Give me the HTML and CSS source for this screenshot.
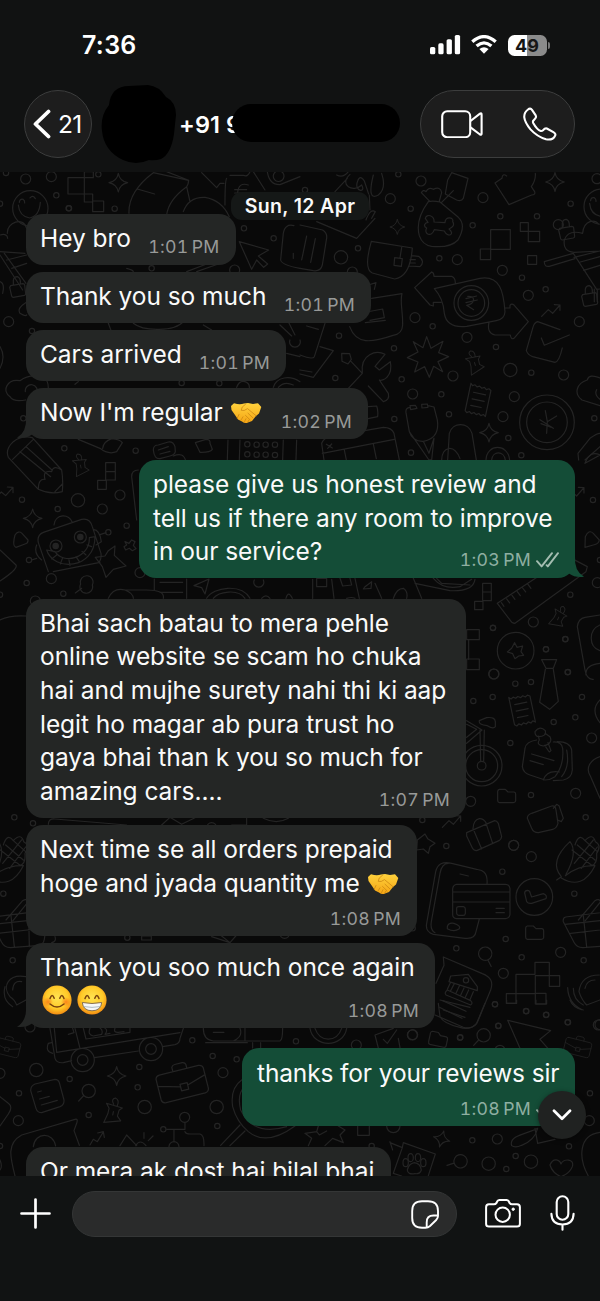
FILE: index.html
```html
<!DOCTYPE html>
<html lang="en">
<head>
<meta charset="utf-8">
<title>Chat</title>
<link rel="stylesheet" href="styles.css">
</head>
<body>
<div class="phone">
  <header class="header">
    <div class="status">
      <span class="clock">7:36</span>
      <div class="status-icons">
        <svg width="31" height="20" viewBox="0 0 31 20" fill="#fff"><rect x="0" y="12" width="5.3" height="7.3" rx="1.6"/><rect x="8.3" y="8.3" width="5.3" height="11" rx="1.6"/><rect x="16.6" y="4.2" width="5.3" height="15.1" rx="1.6"/><rect x="24.8" y="0" width="5.3" height="19.3" rx="1.6"/></svg>
        <svg class="wifi" width="26" height="20" viewBox="0 0 26 20"><g fill="none" stroke="#fff" stroke-width="3.3"><path d="M1.3 6.8Q13-3.5 24.7 6.8"/><path d="M5.6 11.1Q13 4.6 20.4 11.1"/></g><path d="M8.4 14Q13 10.4 17.6 14L13 18.8Z" fill="#fff"/></svg>
        <div class="battery"><span class="level"><b>49</b></span><i></i></div>
      </div>
    </div>
    <div class="toolbar">
      <div class="back"><svg width="18" height="30" viewBox="0 0 18 30" fill="none" stroke="#fff" stroke-width="3.8" stroke-linecap="round" stroke-linejoin="round"><path d="M15.5 2.5 2.5 15l13 12.5"/></svg><span>21</span></div>
      <svg class="avatar" width="76" height="80" viewBox="0 0 76 80"><path d="M8 20Q10 1 28 1L47 0Q58 1 65 12Q75 17 75 30L73 49Q70 69 60 74Q54 76 48 75Q35 81 22 75Q3 66 1 46Q-1 31 8 20Z"/></svg>
      <div class="name">+91 9<span class="redact"></span></div>
      <div class="calls">
        <svg width="42" height="28" viewBox="0 0 42 28" fill="none" stroke="#fff" stroke-width="2.1" stroke-linejoin="round"><rect x="1.2" y="1.2" width="28" height="26" rx="5"/><path d="M29.5 11 39 3.6Q40.6 2.8 40.6 4.7V23.5Q40.6 25.4 39 24.5L29.5 17.3"/></svg>
        <svg width="34" height="34" viewBox="0 0 34 34" fill="none" stroke="#fff" stroke-width="2.1" stroke-linejoin="round"><path d="M5 2.5Q7.3.5 9 2.9L12.7 8.4Q13.6 10 12.1 11.6L10.3 13.7Q9.6 14.7 10.2 16Q14 22.8 17.8 24Q19 24.2 20 23.2Q22 21 23.8 21.5L30.4 25.2Q33.5 27 31.8 29.2Q29.6 33.5 23 32.3Q14 29.6 7.5 22.4Q-3.6 9 5 2.5Z"/></svg>
      </div>
    </div>
  </header>

  <main class="chat">
    <svg class="wallpaper" width="600" height="1004" viewBox="0 172 600 1004">
      <defs>
        <marker id="ring" markerUnits="userSpaceOnUse" markerWidth="30" markerHeight="30" refX="15" refY="15" orient="0"><circle cx="15" cy="15" r="8" fill="none" stroke="#242424" stroke-width="3.6"/></marker>
        <marker id="ringL" markerUnits="userSpaceOnUse" markerWidth="40" markerHeight="40" refX="20" refY="20" orient="0"><circle cx="20" cy="20" r="15" fill="none" stroke="#242424" stroke-width="3.6"/></marker>
        <path id="spark" d="M0-28Q4-5 28 0Q4 5 0 28Q-4 5-28 0Q-4-5 0-28Z"/>
        <path id="lock" d="M-20-6 17-12Q21-12 22-8L25 18Q25 22 21 23L-12 29Q-16 29-17 25L-23-1ZM-12-9V-22Q-10-33 0-33Q10-30 9-13"/>
        <path id="lens" d="M22 0A20 20 0 1 1-18 0A20 20 0 1 1 22 0M-13 14-28 30"/>
        <path id="pin" d="M-28-22 24-16 15-7 13 12 26 25-26 39-18 10-17-8ZM-5-23Q-17-38-3-43Q12-39 7-20M-2 0V11"/>
        <path id="folder" d="M-22-20H-4L4-12H22Q27-11 27-6V15Q26 20 20 20H-22Q-27 19-27 13V-14Q-26-19-22-20Z"/>
        <path id="zig" d="M-28 22-8 2 5 13 27-12M10-13 27-12 27 4"/>
        <path id="receipt" d="M-30-45 -24-39-17-43-10-38-3-42 5-37 12-41 19-36 26-40 33-36 33 44 26 39 19 44 12 39 5 44-3 39-10 44-17 39-24 44-30 39ZM-17-20H20M-17 0H20M-17 20H15"/>
        <path id="case" d="M-60-35H55Q66-34 67-25V35Q66 45 55 46H-60Q-71 45-72 35V-25Q-71-34-60-35ZM-72-5-9 12M67-5 12 12M-9 5H12V24H-9ZM-20-36V-48Q-17-54-10-54H12Q20-53 21-46V-36"/>
        <g id="smile"><circle r="53"/><path d="M-36-10Q-33 24-2 29Q27 24 30-18M-33-18Q-32-29-22-27Q-16-23-17-16M-1-31Q8-42 15-29"/></g>
        <path id="basket" d="M-108-24 46-43Q60-39 54-24L45 43Q42 61 24 62L-57 68Q-75 68-83 52L-115-10Q-117-22-108-24ZM-110-2 50-19M-93 25 48 9M-55-28-45 65M-2-34 0 65M-70-15-20-73Q-8-81-3-70L-49-13"/>
        <path id="corn" d="M-50 55-36 45Q-75 0-10-60Q15-28-22 38M-36 49Q27 87 65 12Q17 10-24 42M5-50Q17-88 35-63Q58-88 66-60Q86-50 70-25Q73 6 55 12M-4-35 57 12M12-50 65-5M35-63 72-30M24 20 72-44M3 5 60-65"/>
      </defs>
      <g class="doodle">
        <g transform="scale(.3333)">
          <polyline class="rings" points="18,519 169,586 206,625 344,626 0,611 295,523"/>
          <polyline class="ringsL" points="77,537 154,530"/>
          <use href="#smile" x="91" y="625"/><use href="#spark" x="355" y="548"/>
          <path d="M204 533H253V582H204ZM253 515H280V533H253ZM253 582H278V606H253ZM278 603H311V635H278ZM387 640Q384 575 460 518L566 541Q565 555 560 560Q505 600 500 645M412 567 464 582M500 515 566 541M560 560 570 605M550 635Q566 590 615 592Q665 600 688 650M605 518 650 563 660 550 672 550M690 526H730Q744 532 750 515M680 535Q675 540 675 615M760 515 795 570M745 555Q715 545 713 580Q725 604 747 590M704 569H740M704 579H738"/>
          <path d="M802 515Q808 555 840 554L900 530M820 527A16 16 0 1 0 852 530A16 16 0 1 0 820 527"/>
        </g>
        <g transform="translate(300 170) scale(.3333)">
          <polyline class="rings" points="332,116 601,139 711,139 518,166 812,101 295,13 174,235 418,265 666,323 737,358 398,469 588,531 117,497 282,535 106,624 305,628 694,608 424,673 447,733 283,747 625,804 883,745 333,848 664,856 15,60"/>
          <polyline class="ringsL" points="363,33 271,86 549,83 775,164 891,26 472,269 607,301 685,376 838,455 345,443 501,502 459,618 791,615 338,672 643,680 609,740 157,306"/>
          <circle cx="123" cy="262" r="20"/><circle cx="631" cy="600" r="20"/>
          <use href="#spark" x="765" y="36"/><use href="#spark" transform="translate(292 171) scale(.8)"/><use href="#spark" x="567" y="788"/>
          <use href="#smile" x="905" y="110"/><use href="#lock" x="799" y="181"/><use href="#lock" x="868" y="380"/>
          <use href="#zig" x="753" y="417"/><use href="#pin" transform="translate(525 577) rotate(-18) scale(.85)"/><use href="#receipt" transform="translate(533 690) rotate(12)"/>
          <path d="M110 15Q130 25 145 5M105 65 142 25M150 13C115 45 160 70 185 45C200 70 160 65 173 33Q180 13 193 33L206 72M220 15Q200 95 235 75Q260 55 245 10M208 75 210 120M50 155 170 205 225 145M198 150Q210 115 226 125L215 145"/>
          <path d="M455 8 504 25 490 85Q485 95 470 90L436 72 443 30ZM425 97 460 62M385 95Q345 150 358 197Q367 225 395 229 450 235 474 210Q500 165 475 142L420 96Q398 91 385 95ZM390 95 364 68Q370 57 378 65Q385 50 400 58Q422 48 425 68L418 93"/>
          <path d="M376 145C379 130 404 136 402 156L435 158C435 137 463 141 458 155C468 170 448 175 447 177C467 193 443 205 433 183L403 179C395 204 370 192 380 174C368 168 375 158 384 157ZM585 39 606 25Q607 8 620 18M585 39 627 104 695 75Q707 75 704 65L694 50Q708 30 706 10"/>
          <path d="M572 179H631V238H572ZM541 237H572V269H541ZM661 158H685V184H661ZM685 184H719V215H685ZM683 257H710V283H683ZM895 162Q887 150 870 155Q850 162 848 190Q804 178 793 210Q788 245 822 247L900 243M733 275 820 250 890 358 900 357M733 275Q733 292 748 289L825 266M822 262 900 243M841 276 900 260M851 301 900 286M883 357V395M892 357V395"/>
          <path d="M214 214 337 234Q331 320 284 327L217 309Q190 298 214 214ZM335 257 356 259Q377 275 360 290L326 288M330 269H346M328 279H346M305 232 300 264M284 263 307 266 304 289 282 286ZM0 165 68 180Q84 190 79 210L67 285Q62 305 40 302L0 295M20 198 5 270M46 206 32 277"/>
          <path d="M395 306 344 353 390 405 400 408 400 397H423M395 306Q402 308 402 319H455Q467 323 466 342M403 356 540 325C600 315 611 365 615 425Q614 447 589 452L500 469Q440 475 433 430Q430 385 403 356ZM614 414H630V406Q635 399 643 406L685 455 642 505Q633 510 631 495H585Q560 490 567 458M462 399A52 52 0 1 0 566 399A52 52 0 1 0 462 399M474 399A40 40 0 1 0 554 399A40 40 0 1 0 474 399M498 386 530 378M498 398 532 390M503 379C529 377 525 403 500 406L521 419"/>
          <path d="M215 385 306 371C299 400 309 420 308 465Q307 492 279 496C215 518 169 525 149 470M200 426 248 417 253 443 210 451M196 458 256 451M205 345 228 338 223 358M380 500 393 535 429 514 416 548 446 560 414 575 428 605 401 589 388 622 374 590 344 606 354 576 322 563 354 546 340 515 369 533Z"/>
          <path d="M145 655 187 610C180 550 230 540 255 553L225 589 238 600 271 575C280 620 247 635 238 630L265 670Q270 690 250 695L205 648M187 610 153 574M125 550 149 551 154 568 144 582 126 574ZM20 468 55 478M75 460 43 560Q38 570 0 555M60 530 100 542 40 622 0 612M0 600 36 606"/>
          <path d="M780 479 713 455Q702 458 698 475L679 542Q684 555 698 560L765 577Q777 577 787 534M724 504 733 526 808 495M900 624Q867 610 862 630C830 640 820 670 846 690L900 707M890 659Q882 675 900 688M659 757A82 82 0 1 0 823 757A82 82 0 1 0 659 757M680 757A61 61 0 1 0 802 757A61 61 0 1 0 680 757M736 722 742 755 770 738M742 755 740 790M720 749 760 775M723 761 753 772"/>
          <path d="M330 707 346 706 351 715 332 719ZM365 703 382 702 384 712 366 714ZM330 712Q316 713 318 728L328 785Q337 815 370 814Q420 805 412 750L402 711 384 707M328 785 387 870 395 870 402 805M370 814 387 850 402 805M443 870 448 790C458 755 505 755 516 790L529 870M425 870C425 830 462 820 480 866M558 870C560 820 625 820 629 870M575 870C578 842 612 842 616 870M205 710 230 708Q235 720 233 740L204 746M900 790Q890 790 870 805L834 850 836 870M855 870 900 830M65 820Q70 805 90 800L250 772Q275 772 282 790L298 870M67 850 283 808M133 840 139 870M220 822 229 866M79 823 97 834M83 835 95 822M65 820 72 870"/>
        </g>
        <g transform="translate(0 200) scale(.3333)">
          <polyline class="rings" points="207,25 732,85 821,115 455,205 96,393 70,655 658,550 545,549"/><polyline class="ringsL" points="26,365 704,210"/>
          <use href="#lock" x="52" y="263"/>
          <path d="M0 105Q22 99 23 115M22 100C20 67 70 48 80 85M0 155 75 160M0 165 68 270M13 160 78 250M20 180 80 165M35 205 80 190M0 245Q15 250 8 280M77 308Q50 325 60 340Q75 350 80 345M30 590C5 575 20 535 60 542Q90 520 130 532Q145 540 145 565M30 590Q40 607 77 600M76 575A18 18 0 1 1 110 580M0 440Q18 470 0 505M718 125 806 150 775 168 803 192 791 202 770 180 755 208ZM882 77Q855 70 850 100L842 180Q845 195 900 205M880 160V175M225 553 235 545M325 370 340 410M400 370C430 395 525 395 550 365M610 375 635 390M840 375 875 408M865 365 885 405M870 420A16 16 0 1 0 900 420M860 460 900 470M820 562C830 530 870 525 900 545M835 562Q853 542 880 555M710 562Q718 540 735 545Q750 550 748 565M380 205Q400 210 400 215M560 215 620 192M590 215 655 192"/>
        </g>
        <g transform="translate(0 430) scale(.3333)">
          <polyline class="rings" points="193,55 407,62 66,209 380,287 80,459 190,491 742,43 770,44 797,44 825,44 742,73 770,74 797,74 825,75 173,237 325,307 87,390 0,494"/><polyline class="ringsL" points="307,237 360,195 106,513 154,446 420,428"/>
          <circle cx="234" cy="211" r="20"/><use href="#spark" x="98" y="265"/><use href="#zig" x="12" y="184"/><use href="#pin" transform="translate(243 105) rotate(-12) scale(.8)"/>
          <path d="M97 23 185 120Q190 150 187 185Q150 195 115 178L25 82Q15 58 40 35Q65 15 97 23ZM38 88 100 28M60 65 152 140M78 50 156 120M115 178Q115 145 135 148Q127 120 155 125Q160 103 185 120M165 185 187 162M235 28 300 55Q325 75 350 65L367 38Q360 28 335 26Q310 35 308 55M317 98H346V125H317ZM317 125H346V150H317ZM293 151H319V178H293ZM460 60Q460 45 475 45L505 36Q520 34 525 50L526 65Q524 75 510 78L480 86Q463 88 460 60ZM475 60 505 50M480 72 510 64M520 78Q550 65 557 92M586 38 618 28Q632 28 630 40L637 58Q630 68 600 67ZM684 30 682 90M720 30 718 90M850 30 848 90M890 30 888 90M415 120Q395 120 395 140L410 270"/>
          <path d="M45 315Q55 300 66 310L84 330Q85 340 75 342L48 352Q36 348 45 315ZM0 360 48 405Q55 417 0 453M115 338Q110 315 130 307L245 268Q270 263 277 290L303 370Q305 390 295 398M115 338 145 425M160 425 300 397M162 285C165 250 210 250 217 278M110 345Q100 370 125 390M280 298Q300 300 304 335L288 345M300 314 318 308M95 390 110 385M150 348A18 18 0 1 0 186 348A18 18 0 1 0 150 348M223 321A18 18 0 1 0 259 321A18 18 0 1 0 223 321M140 360C160 425 285 420 285 320L268 323C270 385 190 405 165 365ZM155 387 170 375M181 402 187 386M210 407 207 390M238 395 228 380M258 375 246 364M275 350 261 345M325 362 345 348 343 376 378 408 340 418 318 442 307 410 286 382 315 378ZM375 335 387 340 395 330 405 335 400 346 408 356 397 362 388 355 377 360 372 350 380 345Z"/>
          <circle cx="167" cy="348" r="8" fill="#242424"/><circle cx="241" cy="321" r="8" fill="#242424"/>
          <path d="M242 462A19 19 0 1 0 277 465A19 19 0 1 0 242 462M245 475 226 489M325 505Q340 472 375 480L440 480Q495 480 490 505M375 480Q400 490 400 505M463 447V480M560 447V505M480 457H548M480 487H548M627 447 582 467 605 473 615 492ZM620 505C640 470 725 460 750 505M640 505C655 485 715 475 735 505M763 450A15 15 0 1 0 790 450M785 505Q798 490 810 505M858 505Q865 480 877 505M0 570Q30 555 78 558"/>
        </g>
        <g transform="translate(300 440) scale(.3333)">
          <polyline class="rings" points="879,180 811,464 579,563 738,628 796,597 803,697 900,360"/><polyline class="ringsL" points="700,546 581,702 892,428"/>
          <use href="#zig" x="825" y="155"/><use href="#pin" transform="translate(778 532) rotate(25) scale(.8)"/>
          <path d="M900 45Q870 30 855 70ZM856 290Q866 267 880 280L898 300Q897 312 880 315L855 322ZM592 490 805 350 862 380 858 395 645 550Q635 550 630 540ZM604 488 612 499M620 477 629 489M636 466 645 478M652 455 661 467M668 444 677 456M684 433 693 445M548 430H574V456H548ZM548 456H574V482H548ZM524 484H549V509H524ZM500 569H538V599H500ZM500 657H538V689H500ZM592 632A54 54 0 1 0 702 632A54 54 0 1 0 592 632M644 608 651 622 668 618 663 635 671 646 656 648 645 656 638 641 622 636 635 625ZM832 560Q835 535 855 532L900 525M832 560 855 690Q860 720 880 718M900 555C865 570 865 620 900 632M725 659H770L760 685H738ZM900 670Q855 675 858 705M38 418V475M50 440V415H80V440ZM95 418 102 475M120 415 128 438 155 435 150 415M165 415 178 475M195 440 215 425 213 445 190 447ZM225 430 245 475M280 475Q290 445 310 445 325 455 320 475M340 415 365 475M400 415Q430 450 480 440L515 418M410 415 425 430 510 435M140 475Q155 470 165 475M345 430 450 452Q520 455 525 418"/>
        </g>
        <g transform="translate(400 600) scale(.3333)">
          <polyline class="rings" points="346,251 393,246 504,216 546,291 526,352 461,366 278,291 220,303 331,429 393,585 557,652 67,660 279,84 496,118 438,148"/><polyline class="ringsL" points="212,604 575,414 527,580 341,736 282,222"/>
          <circle cx="245" cy="497" r="61"/><circle cx="245" cy="497" r="48"/><circle cx="245" cy="497" r="13"/>
          <path d="M436 208 419 307 449 328 475 304 460 208M600 300Q570 330 600 368M600 470C570 480 555 505 572 530L600 595M206 120V178M240 390 242 484M253 390 251 484M200 362 246 390 200 430M200 373 230 388 200 412M262 377Q235 375 238 362L260 353Q285 350 286 365V380Q280 388 262 377Z"/>
          <path d="M410 420Q378 425 375 445L367 500Q370 520 390 525L435 540Q450 540 465 530Q493 495 488 445Q485 425 460 426M472 425Q510 425 515 450L517 510Q515 535 490 540L460 542M500 450Q510 500 485 530M405 395Q420 375 436 392Q440 410 415 410Q405 408 405 395ZM415 408 418 420Q408 435 430 438Q460 430 450 410L435 400M434 436 448 456 453 452 444 428M395 462 462 482M390 482 430 494M430 540Q440 510 478 516"/>
          <use href="#receipt" transform="translate(365 330) rotate(-12)"/><use href="#folder" x="320" y="588"/><use href="#zig" x="155" y="660"/>
          <path d="M395 640 455 618Q466 615 468 630L474 670Q470 685 458 688L415 698Q400 698 395 685L382 655Q382 645 395 640ZM460 625 470 613 477 617 490 655 484 665 473 660"/>
        </g>
        <g transform="translate(400 820) scale(.3333)">
          <polyline class="rings" points="139,78 307,155 523,221 317,357 169,385 551,421 365,412 285,553 378,573 438,585 295,618 181,652 504,607 38,325"/><polyline class="ringsL" points="341,76 394,110 482,397 310,460 38,644 600,614"/>
          <path d="M75 42 83 56 105 70 90 80 85 100 70 87 50 90 52 60ZM200 38 284 2Q290 2 295 10L305 50Q304 58 297 62L230 92Q220 92 216 82L200 48ZM220 28 245 87M258 10 278 70M219 26Q220 0 238 -4Q250 -5 258 8"/>
          <use href="#corn" x="520" y="125"/><use href="#basket" x="605" y="315"/><use href="#folder" x="404" y="338"/><use href="#folder" transform="translate(115 658) rotate(12)"/><use href="#lens" x="249" y="646"/><use href="#lens" transform="translate(255 403) rotate(-70)"/>
          <path d="M261 193C265 150 240 150 230 148L155 130Q115 120 107 155L80 310Q75 335 100 343L195 355Q225 358 228 335L238 297M145 130Q125 130 120 160L94 305Q90 330 105 338M180 162 205 168M142 320Q145 307 162 310 185 318 177 327 162 337 142 326ZM170 193H317Q329 194 330 206V284Q328 295 317 296H170Q158 294 158 284V206Q160 194 170 193ZM158 216H330M158 246H330M170 263Q170 260 176 260H190Q196 261 196 267V280Q195 286 190 286H176Q170 285 170 280ZM288 265H313M288 278H313M348 231A55 55 0 1 0 458 231A55 55 0 1 0 348 231M374 219Q374 212 382 211Q390 212 390 218L395 231 430 221Q442 225 438 236L395 250Q385 252 380 245Z"/>
          <path d="M130 411 247 461Q285 475 272 510L235 600Q225 630 190 622L105 585M130 411 132 436 108 490M147 485 152 468 205 463 232 500 232 512ZM190 481A8 8 0 1 0 206 481A8 8 0 1 0 190 481M142 510 212 542Q220 550 212 555L138 525Q132 518 142 510ZM152 487 142 508M163 491 152 512M178 498 168 520M192 504 182 526M206 510 196 532M220 515 210 539M128 542 198 574M118 562 186 595M348 463H405V427H448V467H479V499H448V467H406V521H348ZM348 521H319V550H348ZM406 520H438V552H406ZM598 465C555 465 540 490 537 515Q545 540 560 555L600 540M555 505Q560 480 585 480M520 505Q520 540 550 555M503 503Q505 550 545 569M323 601 452 632 420 658 445 687M323 601 360 685"/>
          <use href="#case" transform="translate(535 680) rotate(14) scale(.57)"/>
        </g>
        <g transform="translate(0 800) scale(.3333)">
          <polyline class="rings" points="43,52 99,70 10,281 38,481 382,413"/><polyline class="ringsL" points="90,681 635,83 854,400"/>
          <use href="#corn" x="5" y="185"/><use href="#basket" x="88" y="375"/>
          <path d="M145 73Q145 55 165 57L380 75M485 75 510 52 545 73 585 53M695 75H740V55M790 55Q830 75 865 55M78 530C25 520 5 560 30 590Q45 600 50 615L78 600M38 570Q40 540 65 545M15 560Q5 600 38 620M425 408H454V420H425ZM635 410 690 428M665 408 690 428 710 405M165 410Q170 425 155 428"/>
        </g>
        <g transform="translate(0 1000) scale(.3333)">
          <polyline class="rings" points="577,121 638,168 710,178 418,201 413,262 209,237 57,280 266,345 652,378 888,124 0,438 490,388"/><polyline class="ringsL" points="669,218 55,362 554,352 0,220 522,440"/>
          <circle cx="109" cy="210" r="20"/><circle cx="434" cy="321" r="20"/><circle cx="650" cy="321" r="20"/>
          <use href="#spark" x="350" y="228"/><use href="#pin" transform="translate(342 335) rotate(10) scale(.95)"/><use href="#lens" x="264" y="273"/><use href="#case" transform="translate(548 246) rotate(-14) scale(1.05)"/><use href="#case" transform="translate(22 140) rotate(14) scale(.57)"/>
          <path d="M150 85 165 175Q170 190 190 188L215 182M283 173 415 153M488 140 525 134Q540 130 540 115L550 85M163 85 170 157 540 98M225 85 240 145M205 103 222 98 218 85M158 160Q135 155 145 130L155 128M250 85 258 117 390 97 390 82M270 85Q262 105 280 108L305 103Q310 90 300 84M315 85Q325 90 315 103L330 100M345 85Q340 98 355 97L372 95M213 180A35 35 0 1 0 283 180A35 35 0 1 0 213 180M232 180A16 16 0 1 0 264 180A16 16 0 1 0 232 180M418 147A35 35 0 1 0 488 147A35 35 0 1 0 418 147M437 147A16 16 0 1 0 469 147A16 16 0 1 0 437 147M610 85Q610 120 640 123H840Q848 120 848 85M735 85V123M617 128H742M758 128V144M782 128V144M640 97H672M720 85Q730 110 700 123"/>
          <path d="M105 252 165 238Q175 238 178 248L192 300Q193 315 180 320L125 338Q112 338 108 325L92 272Q92 257 105 252ZM113 276 124 273M119 297 148 289M124 315 172 301M0 290 25 310Q40 320 25 342L0 378M45 528C30 470 20 430 65 405L225 358Q235 355 230 370L222 392 238 436M100 440C105 395 160 395 167 438M270 435 280 418 292 425 310 396M293 399 310 395 313 412M360 437 380 405 410 437M407 437Q420 415 438 437M432 398V415M459 408 445 422M500 388H522V425M522 388H555V368M555 395Q558 402 570 402H600Q613 405 612 437M725 240Q690 265 698 320Q710 365 745 395Q800 440 885 378M735 260Q710 280 722 330Q760 410 860 380M720 375 662 436M735 393 690 437M0 480Q8 500 0 510"/>
        </g>
        <g transform="translate(300 1000) scale(.3333)">
          <polyline class="rings" points="585,13 679,34 739,44 595,77 480,113 803,67 870,280 517,421 807,439 647,468 619,507 215,438"/><polyline class="ringsL" points="337,105 169,135 868,362 592,417 600,151 895,75"/>
          <circle cx="566" cy="491" r="20"/><circle cx="693" cy="485" r="20"/><circle cx="280" cy="378" r="20"/><use href="#spark" transform="translate(425 417) rotate(15) scale(.9)"/><use href="#lens" transform="translate(480 483) rotate(28)"/>
          <path d="M30 85C40 145 130 145 140 85M45 85C60 128 110 128 125 85M225 105 280 85M225 105 235 144M250 118 262 130 290 90M295 115 300 143M173 378V406H208V378M15 400 50 395 55 378M15 400 35 415 25 437M50 395 58 405 80 393M75 437 98 415 130 428 120 405 135 390 115 378M270 428 307 443 310 428 406 462 385 527M278 450 270 425M307 443 280 520 305 528M750 495C760 470 780 480 783 492C790 475 825 475 817 500Q810 520 783 530Q758 520 750 495ZM900 397C835 405 835 475 865 528M635 437C625 405 690 400 713 385Q705 420 665 436Q645 445 635 437ZM705 385 713 430 765 418M415 10 420 50Q430 70 480 82Q510 92 530 70L555 10M420 0 510 22M430 30 495 52M620 0V10H650V0M708 0V12H740V0M810 0Q820 25 850 30"/>
          <g transform="translate(343 493)"><path d="M0-5Q18-3 21 17Q17 30 2 28Q-20 32-21 17Q-17-2 0-5Z"/><ellipse cx="-26" cy="-5" rx="8" ry="12"/><ellipse cx="-11" cy="-20" rx="8" ry="12"/><ellipse cx="11" cy="-20" rx="8" ry="12"/><ellipse cx="27" cy="-5" rx="8" ry="12"/></g>
        </g>
      </g>
    </svg>

    <svg class="defs" width="0" height="0">
      <defs>
        <radialGradient id="face" cx=".5" cy=".42" r=".58"><stop offset="0" stop-color="#ffe352"/><stop offset=".65" stop-color="#ffca28"/><stop offset="1" stop-color="#f28b12"/></radialGradient>
        <radialGradient id="blush"><stop offset="0" stop-color="#f96a13" stop-opacity=".75"/><stop offset="1" stop-color="#f96a13" stop-opacity="0"/></radialGradient>
        <linearGradient id="hand" x2="0" y2="1"><stop offset="0" stop-color="#ffd23d"/><stop offset="1" stop-color="#f5a514"/></linearGradient>
        <symbol id="shake" viewBox="0 0 32 22">
          <path d="M1 4 4 1.3Q10 3 14 1.5L18 .9 23 2 28 1.2 31.3 5 29 11.5 26 14 22 19 18 20.6Q15 22 12 19.5L8 17.5 5 13 1.5 8Z" fill="url(#hand)"/>
          <path d="M15.5 2.2Q11 5 11.2 8.3Q14 9.5 17.5 6.6L26 13.7M13 14.8 11 18M16 16.7 14.5 19.6M19 18 17.7 20.2M9 12.5 7.3 16M18 11.2 23 16M15.5 13.4 20 17.8" fill="none" stroke="#c98412" stroke-width=".75" stroke-linecap="round"/>
        </symbol>
      </defs>
    </svg>

    <div class="date">Sun, 12 Apr</div>

    <div class="thread">
      <div class="msg w1"><p>Hey bro</p><time>1:01<s></s>PM</time></div>
      <div class="msg w2"><p>Thank you so much</p><time>1:01<s></s>PM</time></div>
      <div class="msg w3"><p>Cars arrived</p><time>1:01<s></s>PM</time></div>
      <div class="msg w4"><p>Now I'm regular <svg class="shake" width="32" height="22"><use href="#shake"/></svg></p><time>1:02<s></s>PM</time>
        <svg class="tail-in" width="24" height="22" viewBox="0 0 24 22"><path d="M9 0Q10 15 0 20.8Q9 22 15 17.5L24 20V0Z"/></svg></div>
      <div class="msg out w5"><p>please give us honest review and<br>tell us if there any room to improve<br>in our service?</p><time>1:03<s></s>PM<svg width="23" height="16" viewBox="0 0 23 16" fill="none" stroke="#a4bdb1" stroke-width="1.9" stroke-linecap="round" stroke-linejoin="round"><path d="M1 9.2 5.6 14.4 16 1.2M10.6 13.2 11.8 14.4 22 1.2"/></svg></time>
        <svg class="tail-out" width="24" height="22" viewBox="0 0 24 22"><path d="M15 0Q14 15 24 20.8Q15 22 9 17.5L0 20V0Z"/></svg></div>
      <div class="msg w6"><p>Bhai sach batau to mera pehle<br>online website se scam ho chuka<br>hai and mujhe surety nahi thi ki aap<br>legit ho magar ab pura trust ho<br>gaya bhai than k you so much for<br>amazing cars....</p><time>1:07<s></s>PM</time></div>
      <div class="msg w7"><p>Next time se all orders prepaid<br>hoge and jyada quantity me <svg class="shake" width="32" height="22"><use href="#shake"/></svg></p><time>1:08<s></s>PM</time></div>
      <div class="msg w8"><p>Thank you soo much once again</p>
        <div class="faces">
          <svg width="30" height="30" viewBox="0 0 30 30"><circle cx="15" cy="15" r="14.6" fill="url(#face)"/><circle cx="6" cy="17" r="5" fill="url(#blush)"/><circle cx="24" cy="17" r="5" fill="url(#blush)"/><path d="M8 13.5Q10 7.5 12.2 13.2M17.8 13.2Q20 7.5 22 13.5M8 19Q15 25 22 19" fill="none" stroke="#7a430d" stroke-width="1.5" stroke-linecap="round"/></svg>
          <svg width="30" height="30" viewBox="0 0 30 30"><circle cx="15" cy="15" r="14.6" fill="url(#face)"/><path d="M8 13.5Q10 7.5 12.2 13.2M17.8 13.2Q20 7.5 22 13.5" fill="none" stroke="#7a430d" stroke-width="1.5" stroke-linecap="round"/><path d="M5.3 17.5Q15 19.5 24.7 17.5Q24 25.6 15 25.8Q6 25.6 5.3 17.5Z" fill="#f5f7f8" stroke="#79624b" stroke-width=".9"/><path d="M6.3 21.5Q15 23.3 23.7 21.5" fill="none" stroke="#9eadb5" stroke-width=".8"/></svg>
        </div>
        <time>1:08<s></s>PM</time>
        <svg class="tail-in" width="24" height="22" viewBox="0 0 24 22"><path d="M9 0Q10 15 0 20.8Q9 22 15 17.5L24 20V0Z"/></svg></div>
      <div class="msg out w9"><p>thanks for your reviews sir</p><time>1:08<s></s>PM<svg width="23" height="16" viewBox="0 0 23 16" fill="none" stroke="#a4bdb1" stroke-width="1.9" stroke-linecap="round" stroke-linejoin="round"><path d="M1 9.2 5.6 14.4 16 1.2M10.6 13.2 11.8 14.4 22 1.2"/></svg></time></div>
      <div class="msg w10"><p>Or mera ak dost hai bilal bhai</p></div>
    </div>
    <div class="jump"><svg width="20" height="12" viewBox="0 0 20 12" fill="none" stroke="#fff" stroke-width="2.7" stroke-linecap="round" stroke-linejoin="round"><path d="M2 1.8 10 9.8 18 1.8"/></svg></div>
  </main>

  <footer class="composer">
    <svg width="31" height="31" viewBox="0 0 31 31" stroke="#fff" stroke-width="2.7" stroke-linecap="round"><path d="M15.5 1.5V29.5M1.5 15.5H29.5"/></svg>
    <div class="input"><svg width="28" height="29" viewBox="0 0 28 29" fill="none" stroke="#fff" stroke-width="1.9" stroke-linejoin="round"><path d="M27 16V11Q27 1.2 17 1.2H11Q1.2 1.2 1.2 11V18Q1.2 27.8 11 27.8H14.5Q17 27.8 19 26L25.2 20Q27 18.2 27 16ZM26.6 15.5H22.5Q15.5 15.5 15.7 22.5V27.4"/></svg></div>
    <svg class="camera" width="36" height="29" viewBox="0 0 36 29" fill="none" stroke="#fff" stroke-width="2" stroke-linejoin="round"><path d="M4 5.3H9Q10.5 5.3 11.3 4.2L12.3 2.2Q13 1.1 14.5 1.1H21.5Q23 1.1 23.7 2.2L24.7 4.2Q25.5 5.3 27 5.3H32Q34.9 5.4 34.9 8.2V25Q34.9 27.6 32 27.6H4Q1.1 27.6 1.1 25V8.2Q1.1 5.4 4 5.3Z"/><circle cx="17.7" cy="15.7" r="7.2"/><circle cx="28.2" cy="10.2" r="1.2" fill="#fff" stroke-width="1"/></svg>
    <svg class="mic" width="25" height="36" viewBox="0 0 25 36" fill="none" stroke="#fff" stroke-width="2.1" stroke-linecap="round"><rect x="6.7" y="1.3" width="11.6" height="23.4" rx="5.8"/><path d="M1.4 18.7Q1.6 29.3 12.5 29.5Q23.4 29.3 23.6 18.7M12.5 29.5V34.7"/></svg>
  </footer>
</div>
</body>
</html>
```
FILE: styles.css
```css
* { box-sizing: border-box; }
body { margin: 0; background: #111; }
svg { display: block; flex: none; }
.phone {
  width: 600px; height: 1301px; overflow: hidden;
  display: flex; flex-direction: column;
  font-family: Inter, "Liberation Sans", sans-serif; color: #fafafa;
}

/* header */
.header { height: 172px; flex: none; background: #111212; }
.status { height: 85px; padding: 29px 50px 0 82px; display: flex; justify-content: space-between; }
.clock { font-size: 25px; line-height: 32px; font-weight: 600; letter-spacing: .3px; color: #fff; }
.status-icons { display: flex; height: 32px; align-items: center; }
.wifi { margin: 0 11px 0 10px; }
.battery { display: flex; align-items: center; }
.level {
  width: 39px; height: 21px; border-radius: 6.5px; text-align: center;
  background: linear-gradient(90deg, #fff 49%, #8b8b8b 49%);
}
.level b { display: block; font-size: 18px; line-height: 21.5px; font-weight: 700; color: #161616; }
.battery i { width: 2.5px; height: 7px; margin-left: 1px; border-radius: 0 3px 3px 0; background: #777; }
.toolbar { height: 78px; padding: 0 25px 0 24px; display: flex; align-items: center; }
.back {
  width: 68px; height: 68px; flex: none; border-radius: 50%; margin-right: 9px;
  border: 1px solid #3c3d3d; background: #1d1d1d;
  display: flex; align-items: center; padding-left: 8px; gap: 7px;
  font-size: 24.5px; letter-spacing: -.6px; color: #fff;
}
.avatar { fill: #000; margin-top: 1px; }
.name {
  width: 222px; margin: 0 0 0 2px; display: flex; align-items: center;
  font-size: 23.5px; font-weight: 600; color: #fff; white-space: nowrap; letter-spacing: .1px;
}
.redact { width: 168px; height: 38px; flex: none; margin: -3px 0 0 -9px; border-radius: 19px; background: #000; position: relative; }
.calls {
  width: 155px; height: 68px; flex: none; margin-left: auto; border-radius: 34px;
  border: 1px solid #3c3d3d; background: #1d1d1d;
  display: flex; align-items: center; justify-content: space-between; padding: 0 17.5px 0 20px;
}

/* conversation */
.chat { position: relative; height: 1004px; flex: none; overflow: hidden; background: #090909; }
.wallpaper { position: absolute; top: 0; left: 0; }
.defs { position: absolute; }
.doodle { fill: none; stroke: #242424; stroke-width: 3.6; stroke-linecap: round; stroke-linejoin: round; }
.rings { stroke: none; marker: url(#ring); }
.ringsL { stroke: none; marker: url(#ringL); }
.date {
  position: relative; width: 138px; height: 28px; margin: 20px auto 0; border-radius: 11px;
  background: #151817; text-align: center; font-size: 19.5px; line-height: 29px; font-weight: 600; letter-spacing: .35px;
}
.thread { position: relative; margin-top: -6.5px; padding: 0 25px 0 26px; display: flex; flex-direction: column; gap: 7.2px; }
.msg { position: relative; display: grid; padding: 8.2px 0 0 14px; border-radius: 17px; background: #242625; white-space: nowrap; height: 51px; }
.msg p { grid-area: 1 / 1; margin: 0; font-size: 24.5px; line-height: 33.6px; letter-spacing: -.05px; }
.msg time {
  grid-area: 1 / 1; place-self: end; margin: 0 16px 6.5px 0;
  font-size: 17.7px; line-height: 22px; letter-spacing: .3px; color: #989a99;
  font-variant-numeric: tabular-nums;
  display: flex; align-items: center;
}
.msg time s { width: 3px; }
.msg time svg { margin-left: 5px; }
.out { align-self: flex-end; background: #144d37; margin: 13.6px 0; }
.out time { color: #8fafa2; }
.w1 { width: 209.5px; }
.w2 { width: 345px; }
.w3 { width: 260px; }
.w4 { width: 342px; }
.w5 { width: 436px; height: 118px; }
.w6 { width: 440px; height: 219.2px; }
.w7 { width: 391px; height: 111px; }
.w8 { width: 409px; height: 85px; }
.w9 { width: 333px; height: 78px; margin-bottom: 13px; margin-top: 13px; padding-left: 15px; }
.w9 p { letter-spacing: -.13px; }
.w10 { width: 365px; }
.shake { display: inline-block; vertical-align: -3px; }
.faces { grid-area: 1 / 1; align-self: end; display: flex; gap: 5px; padding: 0 0 13px 2px; }
.tail-in { position: absolute; left: -9px; bottom: 0; fill: #242625; }
.tail-out { position: absolute; right: -9px; bottom: 0; fill: #144d37; }
.jump {
  position: absolute; right: 14px; bottom: 37px; width: 48px; height: 48px; border-radius: 50%;
  background: #202221; display: grid; place-items: center; box-shadow: 0 1px 5px #0006;
}

/* composer */
.composer { flex: 1; background: #111313; display: flex; align-items: flex-start; padding: 15px 25px 0 20px; }
.composer > svg { margin-top: 7px; }
.input {
  width: 385px; height: 46px; margin: 0 28px 0 21px; border-radius: 23px;
  border: 1px solid #343636; background: #2a2b2b;
  display: flex; align-items: center; justify-content: flex-end; padding-right: 17px;
}
.composer .camera { margin-top: 8px; }
.composer .mic { margin: 4px 0 0 auto; }
```
